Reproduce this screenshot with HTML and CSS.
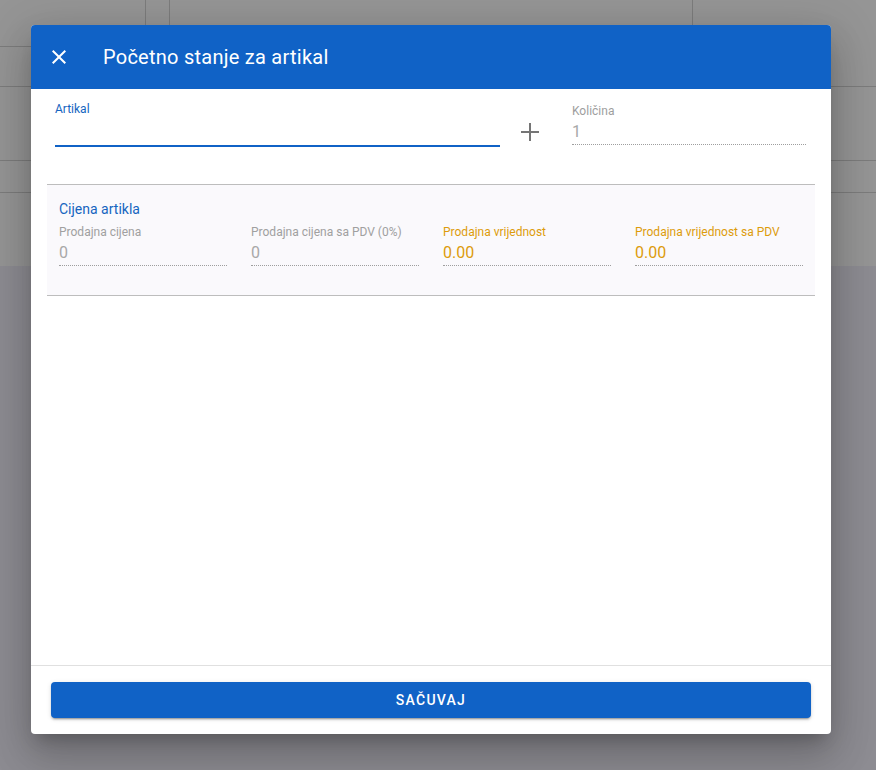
FILE: index.html
```html
<!DOCTYPE html>
<html>
<head>
<meta charset="utf-8">
<link rel="stylesheet" href="styles.css">
</head>
<body>
<div class="page">
  <div class="bg-top">
    <div class="vl vl1"></div>
    <div class="vl vl2"></div>
    <div class="vl vl3"></div>
    <div class="hl hl1"></div>
    <div class="hl hl2"></div>
    <div class="hl hl3"></div>
    <div class="hl hl4"></div>
  </div>
  <div class="bg-bottom"></div>
</div>
<div class="overlay"></div>
<div class="dialog">
  <header class="toolbar">
    <button class="close-btn" aria-label="close">
      <svg width="24" height="24" viewBox="0 0 24 24"><path d="M19 6.41L17.59 5 12 10.59 6.41 5 5 6.41 10.59 12 5 17.59 6.41 19 12 13.41 17.59 19 19 17.59 13.41 12z" fill="#fff"/></svg>
    </button>
    <div class="title">Početno stanje za artikal</div>
  </header>
  <main class="content">
    <div class="top-row">
      <div class="field field-artikal">
        <label class="lbl lbl-active">Artikal</label>
        <div class="input-line active"></div>
      </div>
      <button class="add-btn" aria-label="add">
        <svg width="20" height="20" viewBox="0 0 20 20"><path d="M10 1v18M1 10h18" stroke="#757575" stroke-width="2"/></svg>
      </button>
      <div class="field field-kolicina">
        <label class="lbl">Količina</label>
        <div class="val val-disabled">1</div>
      </div>
    </div>
    <section class="price-box">
      <div class="section-title">Cijena artikla</div>
      <div class="price-grid">
        <div class="pfield">
          <div class="plbl">Prodajna cijena</div>
          <div class="pval">0</div>
        </div>
        <div class="pfield">
          <div class="plbl">Prodajna cijena sa PDV (0%)</div>
          <div class="pval">0</div>
        </div>
        <div class="pfield warn">
          <div class="plbl">Prodajna vrijednost</div>
          <div class="pval">0.00</div>
        </div>
        <div class="pfield warn">
          <div class="plbl">Prodajna vrijednost sa PDV</div>
          <div class="pval">0.00</div>
        </div>
      </div>
    </section>
  </main>
  <footer class="actions">
    <button class="save-btn">SAČUVAJ</button>
  </footer>
</div>
</body>
</html>
```

FILE: styles.css
```css
* { box-sizing: border-box; }
html, body { margin: 0; padding: 0; }
body {
  width: 876px;
  height: 770px;
  overflow: hidden;
  font-family: Roboto, "Noto Sans", sans-serif;
  position: relative;
  background: #ffffff;
}
.page {
  display: flex;
  flex-direction: column;
  height: 770px;
}
.bg-top {
  height: 266px;
  background: #ffffff;
  position: relative;
}
.bg-bottom {
  flex: 1;
  background: #f0eef9;
}
.vl { position: absolute; top: 0; width: 1px; background: #d0d0d0; }
.vl1 { left: 145px; height: 25px; }
.vl2 { left: 169px; height: 25px; }
.vl3 { left: 692px; height: 25px; }
.hl { position: absolute; height: 1px; background: #d0d0d0; left: 0; right: 0; }
.hl1 { top: 46px; width: 31px; right: auto; }
.hl2 { top: 86px; }
.hl3 { top: 160px; }
.hl4 { top: 192px; }
.overlay {
  position: absolute;
  inset: 0;
  background: rgba(33, 33, 33, 0.48);
}
.dialog {
  position: absolute;
  left: 31px;
  top: 25px;
  width: 800px;
  height: 709px;
  background: #fff;
  border-radius: 4px;
  overflow: hidden;
  display: flex;
  flex-direction: column;
  box-shadow: 0 11px 15px -7px rgba(0,0,0,.2), 0 24px 38px 3px rgba(0,0,0,.14), 0 9px 46px 8px rgba(0,0,0,.12);
}
.toolbar {
  height: 64px;
  flex: none;
  background: #1062c6;
  display: flex;
  align-items: center;
  padding-left: 16px;
  color: #fff;
}
.close-btn {
  width: 24px;
  height: 24px;
  padding: 0;
  border: 0;
  background: none;
  display: flex;
  margin-right: 32px;
}
.title {
  font-size: 20px;
  font-weight: 400;
  letter-spacing: 0.25px;
}
.content {
  flex: 1;
  padding: 0 16px;
}
.top-row {
  display: flex;
  align-items: flex-start;
  padding: 13px 8px 0;
  height: 95px;
}
.field-artikal {
  width: 445px;
}
.lbl {
  display: block;
  font-size: 12px;
  line-height: 14px;
  color: #9e9e9e;
}
.lbl-active { color: #1565c0; }
.input-line {
  margin-top: 29px;
  height: 2px;
  background: #1062c6;
}
.add-btn {
  border: 0;
  background: none;
  padding: 0;
  width: 20px;
  height: 20px;
  display: flex;
  margin: 20px 0 0 20px;
}
.field-kolicina {
  margin-left: 32px;
  width: 234px;
  padding-top: 2px;
}
.val {
  font-size: 16px;
  line-height: 20px;
  padding-top: 4px;
  padding-bottom: 2px;
  border-bottom: 1px dotted #9e9e9e;
}
.val-disabled { color: #a8a8a8; }
.price-box {
  background: #faf9fc;
  border-top: 1px solid #bdbdbd;
  border-bottom: 1px solid #bdbdbd;
  height: 112px;
  padding: 15px 12px 0;
}
.section-title {
  color: #1565c0;
  font-size: 14px;
  line-height: 18px;
}
.price-grid {
  display: grid;
  grid-template-columns: repeat(4, 192px);
  margin-top: 7px;
}
.pfield {
  width: 168px;
}
.plbl {
  font-size: 12px;
  line-height: 14px;
  color: #a0a0a0;
}
.pval {
  font-size: 16px;
  line-height: 20px;
  padding-top: 4px;
  padding-bottom: 2px;
  color: #a8a8a8;
  border-bottom: 1px dotted #9e9e9e;
}
.warn .plbl, .warn .pval { color: #dd9c0c; }
.actions {
  flex: none;
  border-top: 1px solid #e0e0e0;
  padding: 16px 20px 16px;
}
.save-btn {
  width: 760px;
  height: 36px;
  border: 0;
  border-radius: 4px;
  background: #1062c6;
  color: #fff;
  font-family: Roboto, sans-serif;
  font-size: 14px;
  font-weight: 500;
  letter-spacing: 1.25px;
  display: block;
  box-shadow: 0 3px 1px -2px rgba(0,0,0,.2), 0 2px 2px 0 rgba(0,0,0,.14), 0 1px 5px 0 rgba(0,0,0,.12);
}
```
